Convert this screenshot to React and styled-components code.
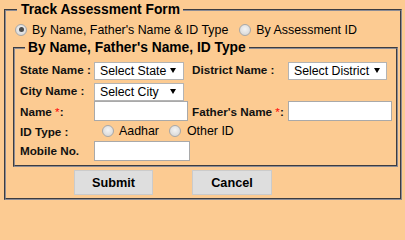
import styled, { createGlobalStyle } from "styled-components";

const GlobalStyle = createGlobalStyle`
  body {
    margin: 0;
    background: #fccb92;
    font-family: "Liberation Sans", Arial, sans-serif;
    color: #000;
  }
`;

const Page = styled.div`
  padding: 2px 3px 0 4px;
`;

const Outer = styled.fieldset`
  margin: 0;
  border: 2px groove #8c8c94;
  padding: 1px 2px 3px 7px;
  min-width: 0;
`;

const Legend = styled.legend`
  margin-left: ${(p) => p.$offset}px;
  padding: 0 3px 0 ${(p) => p.$pad}px;
  font-size: 13.8px;
  font-weight: bold;
  line-height: 16px;
`;

const ModeRow = styled.div`
  display: flex;
  align-items: center;
  height: 21px;
  padding-left: 2px;
  gap: 11px;
`;

const Option = styled.label`
  display: inline-flex;
  align-items: center;
  gap: ${(p) => p.$gap || 5}px;
  font-size: 12.4px;
  white-space: nowrap;
`;

const Radio = styled.input.attrs({ type: "radio" })`
  appearance: none;
  margin: 0;
  width: 12px;
  height: 12px;
  border-radius: 50%;
  border: 1px solid #a8a8a8;
  background: radial-gradient(circle at 50% 40%, #f4f4f4 0%, #dcdcdc 70%, #cfcfcf 100%);
  display: grid;
  place-items: center;
  &:checked::after {
    content: "";
    width: 5px;
    height: 5px;
    border-radius: 50%;
    background: #4a4a4a;
  }
`;

const Inner = styled.fieldset`
  margin: 0;
  border: 2px groove #8c8c94;
  padding: 3px 0 5px 5px;
  min-width: 0;
`;

const Grid = styled.div`
  display: grid;
  grid-template-columns: 74px 98px 96px 1fr;
  grid-template-rows: 21px 21px 20px 20px 19px;
  align-items: center;
`;

const Label = styled.span`
  font-size: 11.7px;
  font-weight: bold;
  white-space: nowrap;
  color: #111;
  grid-column: ${(p) => p.$col || "auto"};
`;

const Req = styled.span`
  color: #f00;
  font-weight: normal;
`;

const SelectWrap = styled.div`
  position: relative;
  width: ${(p) => p.$w}px;
  height: 18px;
`;

const Select = styled.select`
  appearance: none;
  width: 100%;
  height: 100%;
  margin: 0;
  padding: 0 0 0 5px;
  border: 1px solid #b4b4b4;
  border-radius: 0;
  background: #fff;
  font-family: inherit;
  font-size: 12.3px;
  color: #000;
`;

const Arrow = styled.svg`
  position: absolute;
  right: ${(p) => p.$right}px;
  top: 7px;
  pointer-events: none;
`;

const TextInput = styled.input.attrs({ type: "text" })`
  box-sizing: border-box;
  width: ${(p) => p.$w}px;
  height: 20px;
  margin: 0;
  border: 1px solid #a9a9a9;
  background: #fff;
`;

const IdOptions = styled.div`
  grid-column: 2 / 5;
  display: flex;
  align-items: center;
  gap: 10px;
  padding-left: 8px;
`;

const Buttons = styled.div`
  display: flex;
  gap: 39px;
  padding: 3px 0 0 61px;
`;

const Button = styled.button`
  width: ${(p) => p.$w}px;
  height: 25px;
  margin: 0;
  background: #dedede;
  border: 1px solid #cbcbcb;
  font-family: inherit;
  font-size: 12.7px;
  font-weight: bold;
  color: #000;
`;

const Dropdown = ({ width, label, right = 8 }) => (
  <SelectWrap $w={width}>
    <Select defaultValue="">
      <option value="">{label}</option>
    </Select>
    <Arrow $right={right} width="6" height="5" viewBox="0 0 6 5">
      <path d="M0 0H6L3 5Z" fill="#000" />
    </Arrow>
  </SelectWrap>
);

export default function App() {
  return (
    <>
      <GlobalStyle />
      <Page>
        <Outer>
          <Legend $offset={4} $pad={4}>Track Assessment Form</Legend>
          <ModeRow>
            <Option>
              <Radio name="mode" defaultChecked />
              By Name, Father's Name &amp; ID Type
            </Option>
            <Option>
              <Radio name="mode" />
              By Assessment ID
            </Option>
          </ModeRow>
          <Inner>
            <Legend $offset={5} $pad={3}>By Name, Father's Name, ID Type</Legend>
            <Grid>
              <Label>State Name :</Label>
              <Dropdown width={90} label="Select State" />
              <Label>District Name :</Label>
              <Dropdown width={99} label="Select District" right={7} />

              <Label>City Name :</Label>
              <Dropdown width={90} label="Select City" />
              <span />
              <span />

              <Label>
                Name <Req>*</Req>:
              </Label>
              <TextInput $w={94} />
              <Label>
                Father's Name <Req>*</Req>:
              </Label>
              <TextInput $w={104} />

              <Label>ID Type :</Label>
              <IdOptions>
                <Option>
                  <Radio name="idtype" />
                  Aadhar
                </Option>
                <Option $gap={6}>
                  <Radio name="idtype" />
                  Other ID
                </Option>
              </IdOptions>

              <Label $col="1">Mobile No.</Label>
              <TextInput $w={96} />
            </Grid>
          </Inner>
          <Buttons>
            <Button $w={79}>Submit</Button>
            <Button $w={80}>Cancel</Button>
          </Buttons>
        </Outer>
      </Page>
    </>
  );
}
